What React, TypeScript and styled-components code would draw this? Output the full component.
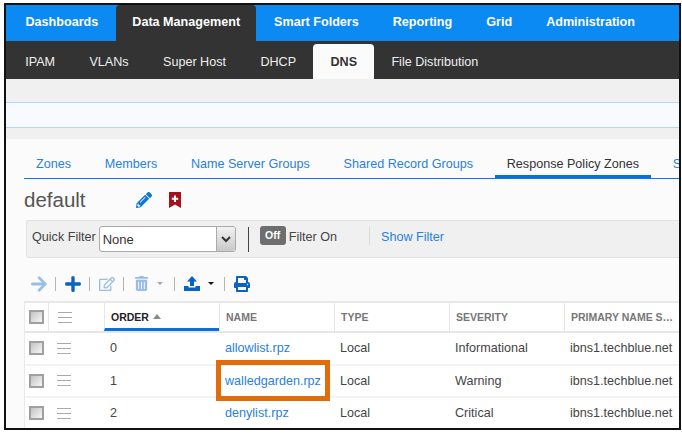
import React from 'react';
import styled, { createGlobalStyle } from 'styled-components';
import { FaPencilAlt, FaPlus, FaRegEdit, FaTrashAlt, FaPrint, FaArrowRight } from 'react-icons/fa';

const GlobalStyle = createGlobalStyle`
  html, body {
    margin: 0;
    padding: 0;
    background: #fff;
    font-family: "Liberation Sans", Arial, sans-serif;
  }
`;

const Frame = styled.div`
  position: relative;
  box-sizing: border-box;
  width: 677px;
  height: 427px;
  margin: 3px 0 0 4px;
  border: 2px solid #111;
  background: #fbfbfb;
  overflow: hidden;
`;

const TopNav = styled.div`
  display: flex;
  box-sizing: border-box;
  height: 36px;
  padding: 0 0 0 3.5px;
  background: #0a8af2;
`;

const TopTab = styled.div<{ $active?: boolean }>`
  display: flex;
  align-items: center;
  box-sizing: border-box;
  padding: 0 16px 2px;
  margin-right: 2px;
  border-radius: 4px 4px 0 0;
  font-size: 12.6px;
  font-weight: bold;
  color: #fff;
  background: ${p => (p.$active ? '#333' : 'transparent')};
`;

const SubNav = styled.div`
  display: flex;
  align-items: flex-end;
  height: 38px;
  padding-left: 2px;
  background: #333;
`;

const SubTab = styled.div<{ $active?: boolean }>`
  display: flex;
  align-items: center;
  box-sizing: border-box;
  height: 35px;
  padding: 0 17.2px;
  border-radius: 4px 4px 0 0;
  font-size: 12.6px;
  font-weight: ${p => (p.$active ? 'bold' : 'normal')};
  color: ${p => (p.$active ? '#333' : '#eee')};
  background: ${p => (p.$active ? '#fbfbfb' : 'transparent')};
`;

const GrayBand = styled.div<{ $h: number }>`
  height: ${p => p.$h}px;
  background: #f0f0f0;
`;

const NoticeBand = styled.div`
  box-sizing: border-box;
  height: 26px;
  background: #f7fbff;
  border-top: 1px solid #b5d6f5;
  border-bottom: 1px solid #b5d6f5;
`;

const Content = styled.div`
  padding: 0 0 0 18px;
`;

const Tabs = styled.div`
  display: flex;
  height: 39px;
  align-items: flex-end;
  border-bottom: 1px solid #0a78e8;
  white-space: nowrap;
  overflow: hidden;
`;

const Tab = styled.div<{ $active?: boolean }>`
  box-sizing: border-box;
  height: 24px;
  margin-bottom: -1px;
  padding: 0 12px;
  font-size: 12.6px;
  line-height: 18px;
  color: ${p => (p.$active ? '#333' : '#2a80e0')};
  border-bottom: ${p => (p.$active ? '4px solid #0a6fdc' : 'none')};
  margin-right: 9.7px;
`;

const TitleRow = styled.div`
  display: flex;
  align-items: center;
  height: 41px;
`;

const Title = styled.div`
  width: 112px;
  font-size: 20.5px;
  color: #555;
`;

const Pencil = styled(FaPencilAlt)`
  width: 16px;
  height: 16px;
  color: #0a78d8;
  margin-right: 17px;
`;

const FilterBar = styled.div`
  display: flex;
  align-items: flex-start;
  box-sizing: border-box;
  height: 38px;
  margin-left: 2px;
  padding: 5px 0 0 5px;
  background: #f0f0f0;
  border: 1px solid #e2e2e2;
  border-right: none;
  border-radius: 3px 0 0 3px;
  font-size: 12.6px;
  color: #444;
`;

const FilterLabel = styled.span`
  margin-top: 1px;
  line-height: 20px;
`;

const Select = styled.div`
  display: flex;
  box-sizing: border-box;
  width: 137px;
  height: 26px;
  margin-left: 3px;
  background: #fff;
  border: 1px solid #aaa;
  border-radius: 3px;
  overflow: hidden;
`;

const SelectValue = styled.div`
  flex: 1;
  padding: 5px 0 0 3px;
  font-size: 13px;
  color: #333;
`;

const SelectArrow = styled.div`
  display: flex;
  align-items: center;
  justify-content: center;
  width: 18px;
  background: linear-gradient(#f2f2f2, #c8c8c8);
  border-left: 1px solid #aaa;
`;

const DarkDivider = styled.div`
  width: 1px;
  height: 25px;
  margin: 1px 11px 0 12px;
  background: #444;
`;

const Toggle = styled.div`
  width: 26px;
  height: 19px;
  border-radius: 3px;
  background: #6e6e6e;
  color: #fff;
  font-size: 10.5px;
  font-weight: bold;
  line-height: 19px;
  text-align: center;
  margin-right: 3px;
`;

const LightDivider = styled.div`
  width: 1px;
  height: 19px;
  margin: 0 11px 0 32px;
  background: #dcdcdc;
`;

const FilterLink = styled.span`
  margin-top: 1px;
  line-height: 20px;
  color: #2a80e0;
`;

const Toolbar = styled.div`
  display: flex;
  align-items: center;
  box-sizing: border-box;
  height: 43px;
  padding: 8px 0 0 7px;
`;

const Sep = styled.div`
  width: 1px;
  height: 14px;
  margin: 0 9px 0 8px;
  background: #b8b4a8;
`;

const ToolIcon = styled.span<{ $faded?: boolean; $gap?: number; $bleed?: boolean }>`
  display: flex;
  width: ${p => (p.$bleed ? '16px' : 'auto')};
  justify-content: center;
  margin-left: ${p => p.$gap ?? 0}px;
  color: #0a63c4;
  opacity: ${p => (p.$faded ? 0.4 : 1)};
  svg {
    display: block;
    flex: none;
  }
`;

const Caret = styled.span<{ $muted?: boolean }>`
  width: 0;
  height: 0;
  margin: 0 ${p => (p.$muted ? 3 : 2)}px 0 8px;
  border-left: 3px solid transparent;
  border-right: 3px solid transparent;
  border-top: 3px solid ${p => (p.$muted ? '#aaa' : '#111')};
`;

const Table = styled.div`
  border-top: 2px solid #e8e8e8;
  border-left: 1px solid #eaeaea;
  background: #fff;
`;

const Row = styled.div<{ $head?: boolean }>`
  display: grid;
  grid-template-columns: 23px 56px 115px 115px 115px 115px 115px;
  height: ${p => (p.$head ? '28px' : '30.5px')};
  align-items: center;
  border-bottom: ${p => (p.$head ? '2px solid #e6e6e6' : '2px solid #f3f3f3')};
  box-sizing: content-box;
  font-size: 12.6px;
  color: #444;
  white-space: nowrap;
`;

const HeadCell = styled.div<{ $sorted?: boolean }>`
  display: flex;
  box-sizing: border-box;
  height: 100%;
  padding: 8px 0 0 6px;
  font-size: 10.5px;
  font-weight: bold;
  color: ${p => (p.$sorted ? '#222' : '#777')};
  border-left: 1px solid #e6e6e6;
  border-bottom: ${p => (p.$sorted ? '3px solid #0a6fdc' : 'none')};
  overflow: hidden;
`;

const DragHeadCell = styled(HeadCell)`
  padding: 9px 0 0 0;
`;

const SortMark = styled.span`
  width: 0;
  height: 0;
  margin: 3px 0 0 4px;
  border-left: 4px solid transparent;
  border-right: 4px solid transparent;
  border-bottom: 5px solid #8a8a8a;
`;

const CheckCell = styled.div`
  display: flex;
  align-items: center;
  justify-content: center;
`;

const Check = styled.span`
  box-sizing: border-box;
  width: 15px;
  height: 14px;
  border: 2px solid #a0a0a0;
  background: linear-gradient(135deg, #c4c4c4, #f6f6f6);
`;

const Lines = styled.span`
  display: block;
  width: 14px;
  height: 9px;
  margin-left: 9px;
  border-top: 1px solid #aaa;
  border-bottom: 1px solid #aaa;
  background: linear-gradient(#aaa, #aaa) center / 100% 1px no-repeat;
`;

const Cell = styled.div`
  padding-left: 6px;
`;

const LinkCell = styled(Cell)`
  color: #2a80e0;
`;

const Highlight = styled.div`
  position: absolute;
  left: 210px;
  top: 355px;
  width: 114px;
  height: 41px;
  box-sizing: border-box;
  border: 5px solid #e36c0a;
`;

const tops = ['Dashboards', 'Data Management', 'Smart Folders', 'Reporting', 'Grid', 'Administration'];
const subs = ['IPAM', 'VLANs', 'Super Host', 'DHCP', 'DNS', 'File Distribution'];
const tabs = ['Zones', 'Members', 'Name Server Groups', 'Shared Record Groups', 'Response Policy Zones', 'Shared'];
const rows = [
  { order: '0', name: 'allowlist.rpz', severity: 'Informational' },
  { order: '1', name: 'walledgarden.rpz', severity: 'Warning' },
  { order: '2', name: 'denylist.rpz', severity: 'Critical' },
];

const Bookmark = () => (
  <svg width="12" height="16" viewBox="0 0 12 16">
    <path d="M0 0h12v16l-6-3.4L0 16z" fill="#a5121e" />
    <path d="M5 3.5h2v2.2h2.2v2H7V10H5V7.7H2.8v-2H5z" fill="#fff" />
  </svg>
);

const UploadIcon = () => (
  <svg width="16" height="15" viewBox="0 0 16 15" fill="currentColor">
    <path d="M8 0l5 5.5H10V10H6V5.5H3z" />
    <path d="M0 10h4.5v1.6h7V10H16v5H0z" />
  </svg>
);

export default function App() {
  return (
    <>
      <GlobalStyle />
      <Frame>
        <TopNav>
          {tops.map(t => (
            <TopTab key={t} $active={t === 'Data Management'}>{t}</TopTab>
          ))}
        </TopNav>
        <SubNav>
          {subs.map(s => (
            <SubTab key={s} $active={s === 'DNS'}>{s}</SubTab>
          ))}
        </SubNav>
        <GrayBand $h={23} />
        <NoticeBand />
        <GrayBand $h={11} />
        <Content>
          <Tabs>
            {tabs.map(t => (
              <Tab key={t} $active={t === 'Response Policy Zones'}>{t}</Tab>
            ))}
          </Tabs>
          <TitleRow>
            <Title>default</Title>
            <Pencil />
            <Bookmark />
          </TitleRow>
          <FilterBar>
            <FilterLabel>Quick Filter</FilterLabel>
            <Select>
              <SelectValue>None</SelectValue>
              <SelectArrow>
                <svg width="10" height="7" viewBox="0 0 10 7">
                  <path d="M1 1l4 4 4-4" fill="none" stroke="#333" strokeWidth="2" />
                </svg>
              </SelectArrow>
            </Select>
            <DarkDivider />
            <Toggle>Off</Toggle>
            <FilterLabel>Filter On</FilterLabel>
            <LightDivider />
            <FilterLink>Show Filter</FilterLink>
          </FilterBar>
          <Toolbar>
            <ToolIcon $faded $bleed><FaArrowRight size={18} /></ToolIcon>
            <Sep />
            <ToolIcon $bleed><FaPlus size={18} /></ToolIcon>
            <Sep />
            <ToolIcon $faded><FaRegEdit size={16} /></ToolIcon>
            <Sep />
            <ToolIcon $faded $gap={1}><FaTrashAlt size={15} /></ToolIcon>
            <Caret $muted />
            <Sep />
            <ToolIcon><UploadIcon /></ToolIcon>
            <Caret />
            <Sep />
            <ToolIcon><FaPrint size={16} /></ToolIcon>
          </Toolbar>
          <Table>
            <Row $head>
              <CheckCell><Check /></CheckCell>
              <DragHeadCell><Lines /></DragHeadCell>
              <HeadCell $sorted>ORDER<SortMark /></HeadCell>
              <HeadCell>NAME</HeadCell>
              <HeadCell>TYPE</HeadCell>
              <HeadCell>SEVERITY</HeadCell>
              <HeadCell>PRIMARY NAME S…</HeadCell>
            </Row>
            {rows.map(r => (
              <Row key={r.order}>
                <CheckCell><Check /></CheckCell>
                <div><Lines /></div>
                <Cell>{r.order}</Cell>
                <LinkCell>{r.name}</LinkCell>
                <Cell>Local</Cell>
                <Cell>{r.severity}</Cell>
                <Cell>ibns1.techblue.net</Cell>
              </Row>
            ))}
          </Table>
        </Content>
        <Highlight />
      </Frame>
    </>
  );
}
